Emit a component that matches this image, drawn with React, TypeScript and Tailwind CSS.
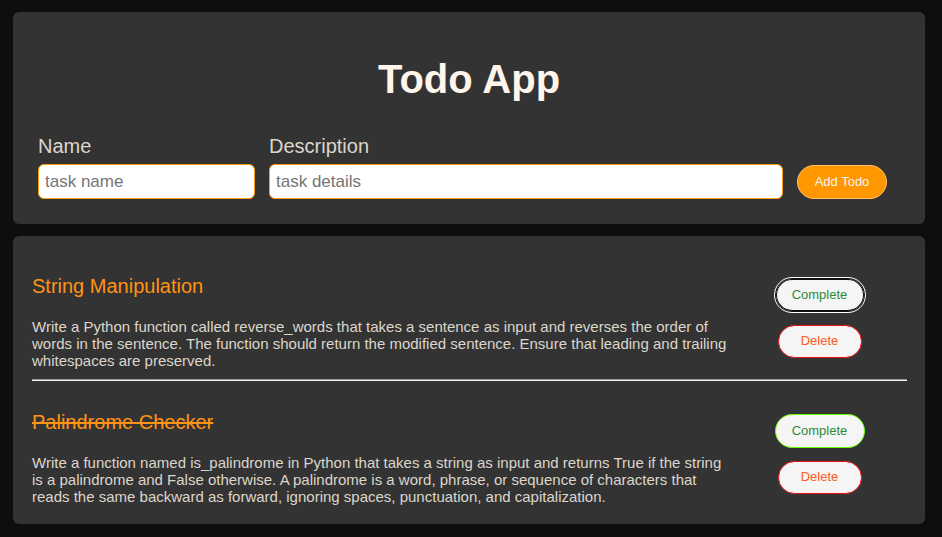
import { useState } from "react";

type Todo = { id: number; name: string; details: string; done: boolean };

const initialTodos: Todo[] = [
  {
    id: 1,
    name: "String Manipulation",
    details:
      "Write a Python function called reverse_words that takes a sentence as input and reverses the order of words in the sentence. The function should return the modified sentence. Ensure that leading and trailing whitespaces are preserved.",
    done: false,
  },
  {
    id: 2,
    name: "Palindrome Checker",
    details:
      "Write a function named is_palindrome in Python that takes a string as input and returns True if the string is a palindrome and False otherwise. A palindrome is a word, phrase, or sequence of characters that reads the same backward as forward, ignoring spaces, punctuation, and capitalization.",
    done: true,
  },
];

const inputStyle =
  "h-[35px] w-full rounded-md border border-[#ff9b0f] bg-white px-1.5 text-[17px] text-black placeholder:text-[#757575] outline-none";

export default function App() {
  const [todos, setTodos] = useState(initialTodos);
  const [focused, setFocused] = useState(1);
  const [name, setName] = useState("");
  const [details, setDetails] = useState("");

  const addTodo = (e: React.FormEvent) => {
    e.preventDefault();
    if (!name) return;
    setTodos([...todos, { id: Date.now(), name, details, done: false }]);
    setName("");
    setDetails("");
  };

  const toggle = (id: number) => {
    setFocused(id);
    setTodos(todos.map((t) => (t.id === id ? { ...t, done: !t.done } : t)));
  };

  return (
    <div className="flex min-h-screen flex-col gap-3 bg-[#0e0e0e] py-3 pr-[17px] pl-[13px] font-['Liberation_Sans',Arial,sans-serif] text-[#dcd6cc]">
      <header className="rounded-md bg-[#333333] px-[25px] pt-11 pb-[25px]">
        <h1 className="text-center text-[40px] leading-[46px] font-bold text-[#fff5ea]">Todo App</h1>
        <form onSubmit={addTodo} className="mt-8 mr-[13px] flex items-end gap-3.5">
          <div className="flex w-[217px] flex-col gap-1.5">
            <label htmlFor="name" className="text-[20px] leading-6">
              Name
            </label>
            <input
              id="name"
              className={inputStyle}
              placeholder="task name"
              value={name}
              onChange={(e) => setName(e.target.value)}
            />
          </div>
          <div className="flex flex-1 flex-col gap-1.5">
            <label htmlFor="details" className="text-[20px] leading-6">
              Description
            </label>
            <input
              id="details"
              className={inputStyle}
              placeholder="task details"
              value={details}
              onChange={(e) => setDetails(e.target.value)}
            />
          </div>
          <button
            type="submit"
            className="h-[34px] w-[90px] rounded-full border border-[#ffc266] bg-[#ff9800] text-[13px] text-[#f5f5f5]"
          >
            Add Todo
          </button>
        </form>
      </header>

      <main className="rounded-md bg-[#333333] pt-[9px] pr-[18px] pb-[19px] pl-[19px]">
        {todos.map((todo, i) => (
          <div key={todo.id}>
            {i > 0 && <hr className="mt-2.5 h-0.5 border-t border-b border-t-[#9a9a9a] border-b-[#eeeeee]" />}
            <article className="flex pt-[29px]">
              <div className="w-4/5">
                <h2
                  className={`text-[20px] leading-6 text-[#ff9313] ${todo.done ? "line-through" : ""}`}
                >
                  {todo.name}
                </h2>
                <p className="mt-5 text-[15px] leading-[17px]">{todo.details}</p>
              </div>
              <div className="flex w-1/5 flex-col items-center gap-[13px] pt-1">
                <button
                  type="button"
                  onClick={() => toggle(todo.id)}
                  className={`h-[34px] w-[90px] rounded-full border bg-[#f5f5f5] text-[13px] text-[#2e8b3a] ${
                    todo.id === focused
                      ? "border-[#101010] outline-1 outline-white ring-1 ring-[#101010] ring-inset"
                      : "border-[#66ff00] outline-none"
                  }`}
                >
                  Complete
                </button>
                <button
                  type="button"
                  onClick={() => setTodos(todos.filter((t) => t.id !== todo.id))}
                  className="h-[33px] w-[84px] rounded-full border border-[#f01010] bg-[#f5f5f5] pb-0.5 text-[13px] text-[#ff5a1f]"
                >
                  Delete
                </button>
              </div>
            </article>
          </div>
        ))}
      </main>
    </div>
  );
}
